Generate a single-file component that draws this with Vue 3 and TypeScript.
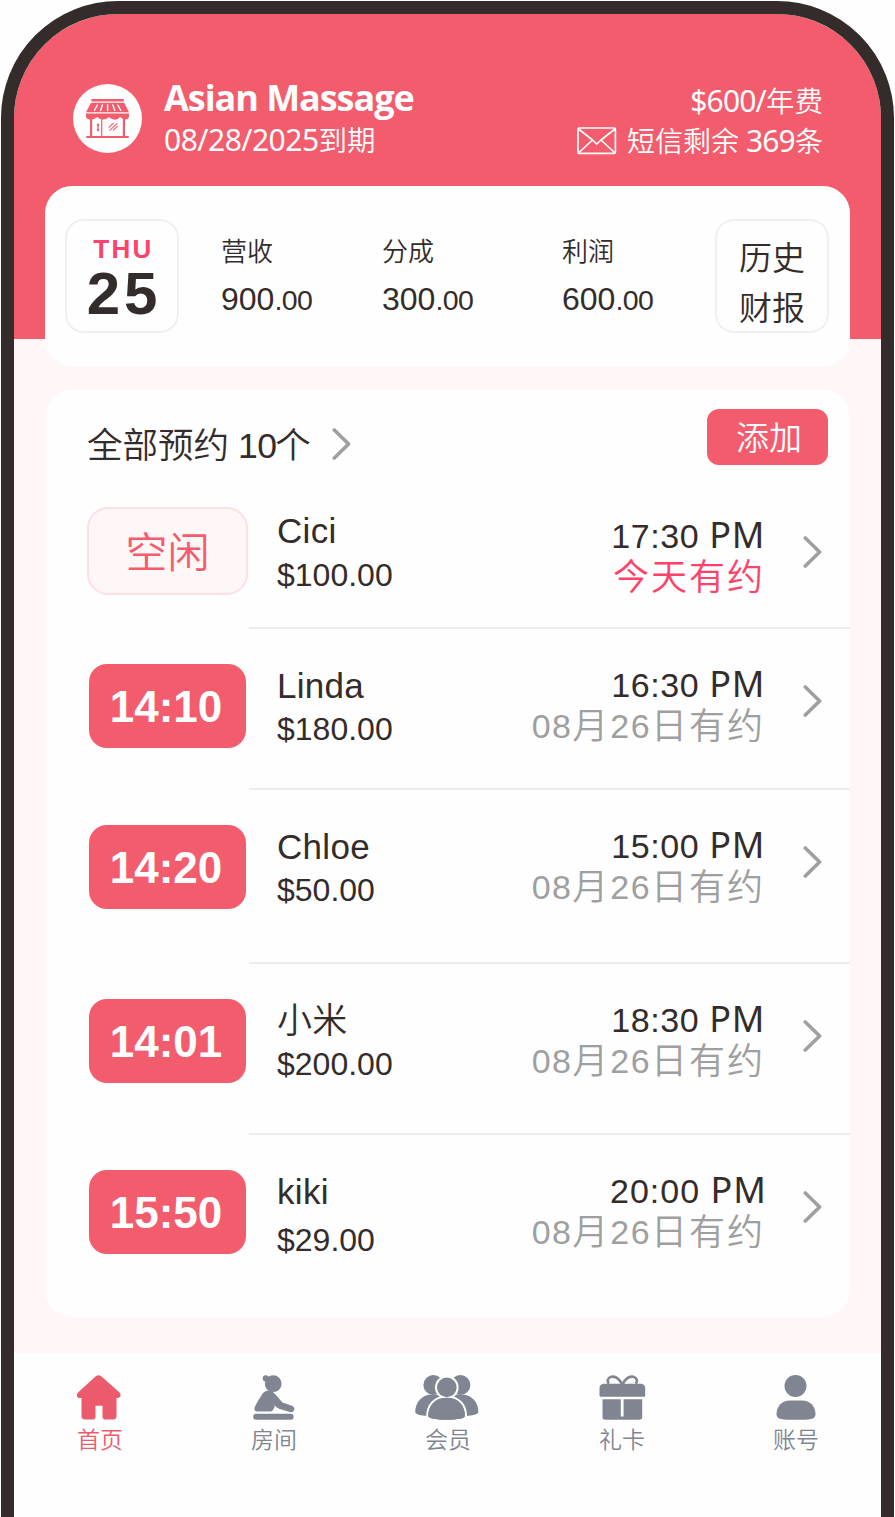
<script setup lang="ts">
interface Stat {
  label: string
  whole: string
  cents: string
}

interface Booking {
  badge: string
  free?: boolean
  name: string
  price: string
  time: string
  note: string
  today?: boolean
  variant: string
}

interface Tab {
  id: string
  label: string
  active?: boolean
}

const stats: Stat[] = [
  { label: '营收', whole: '900', cents: '.00' },
  { label: '分成', whole: '300', cents: '.00' },
  { label: '利润', whole: '600', cents: '.00' },
]

const bookings: Booking[] = [
  { badge: '空闲', free: true, name: 'Cici', price: '$100.00', time: '17:30', note: '今天有约', today: true, variant: 'row-first' },
  { badge: '14:10', name: 'Linda', price: '$180.00', time: '16:30', note: '08月26日有约', variant: 'row-short' },
  { badge: '14:20', name: 'Chloe', price: '$50.00', time: '15:00', note: '08月26日有约', variant: 'row-tall' },
  { badge: '14:01', name: '小米', price: '$200.00', time: '18:30', note: '08月26日有约', variant: 'row-medium' },
  { badge: '15:50', name: 'kiki', price: '$29.00', time: '20:00', note: '08月26日有约', variant: 'row-last' },
]

const tabs: Tab[] = [
  { id: 'home', label: '首页', active: true },
  { id: 'room', label: '房间' },
  { id: 'members', label: '会员' },
  { id: 'gift', label: '礼卡' },
  { id: 'account', label: '账号' },
]

// Splits a note into runs of digits and runs of characters, which are set at different sizes.
const runs = (note: string): string[] => note.match(/\d+|\D+/g) ?? []
const isDigits = (run: string): boolean => /^\d/.test(run)
</script>

<template>
  <div class="stage">
    <div class="phone">
      <header class="top">
        <svg class="shop" viewBox="0 0 69 69">
          <circle cx="34.5" cy="34.5" r="34.5" fill="#fefefe" />
          <g fill="#f25c6c">
            <rect x="18.3" y="15" width="32.6" height="2.6" rx="0.8" />
            <path d="M18 18.8H51.2L56 28.2H13Z" />
            <path d="M13 29.6H56V32.5Q55.5 35.4 52.2 35.4Q49.5 35.4 47.2 33Q44.5 36 41.2 35.6Q38 35.4 35.8 33Q33 35.8 29.5 35.6Q26.3 35.4 24.3 33Q22 35.4 17 35.4Q13.5 35.4 13 32.5Z" />
            <rect x="17" y="35" width="2.2" height="18" />
            <rect x="49.8" y="35" width="2.2" height="18" />
            <rect x="28.1" y="35" width="1.2" height="17" />
            <rect x="13" y="52" width="43" height="2.1" rx="1" />
            <rect x="24.4" y="41" width="1.3" height="5" />
            <circle cx="25" cy="40.8" r="1.2" />
            <circle cx="25" cy="46" r="1.2" />
          </g>
          <g fill="none" stroke="#fefefe" stroke-width="1.4" stroke-linecap="round">
            <path d="M24.4 21L21.4 26.5M29.4 21L27.6 26.5M34.6 20.8V26.5M39.8 21L41.8 26.5M44.8 21L47.8 26.5" />
          </g>
          <path d="M36 43.4L40.2 39.2M36.8 46.4L44 39.6M40.3 46.2L44.3 42.4" fill="none" stroke="#f25c6c" stroke-width="1.1" stroke-linecap="round" />
        </svg>
        <div class="shop-info">
          <div class="shop-name">Asian Massage</div>
          <div class="shop-date">08/28/2025<span class="cjk">到期</span></div>
        </div>
        <div class="plan">
          <div class="plan-fee">$600/<span class="cjk">年费</span></div>
          <div class="plan-sms">
            <svg class="mail" viewBox="0 0 40 28" fill="none" stroke="#fefefe" stroke-width="1.7" stroke-linejoin="round">
              <rect x="1" y="1" width="37.4" height="25.4" rx="1.2" />
              <path d="M1.5 2L15.5 13L19.7 17L24 13L38 2M1.5 26L15.5 13M38 26L24 13" />
            </svg>
            <span><span class="cjk">短信剩余</span> 369<span class="cjk">条</span></span>
          </div>
        </div>
      </header>

      <section class="summary">
        <div class="tile day">
          <span class="weekday">THU</span>
          <span class="date">25</span>
        </div>
        <div class="stats">
          <div v-for="s in stats" :key="s.label" class="stat">
            <div class="stat-label">{{ s.label }}</div>
            <div class="stat-value">{{ s.whole }}<small>{{ s.cents }}</small></div>
          </div>
        </div>
        <div class="tile history">
          <span>历史</span>
          <span>财报</span>
        </div>
      </section>

      <section class="card">
        <div class="card-head">
          <h2 class="card-title">全部预约<span class="count">10</span>个</h2>
          <svg class="chevron head-chevron" viewBox="0 0 20 34"><path d="M2.3 3L16.6 17L2.3 31" /></svg>
          <button class="add">添加</button>
        </div>
        <template v-for="(b, i) in bookings" :key="b.name">
          <div v-if="i > 0" class="divider"></div>
          <div class="row" :class="b.variant">
            <div class="badge" :class="{ free: b.free }">{{ b.badge }}</div>
            <div class="guest">
              <div class="name">{{ b.name }}</div>
              <div class="price">{{ b.price }}</div>
            </div>
            <div class="slot">
              <div class="time">{{ b.time }} <span class="pm">PM</span></div>
              <div class="note" :class="{ today: b.today }"><span v-for="(run, n) in runs(b.note)" :key="n" :class="{ digits: isDigits(run) }">{{ run }}</span></div>
            </div>
            <svg class="chevron" viewBox="0 0 20 34"><path d="M2.3 3L16.6 17L2.3 31" /></svg>
          </div>
        </template>
      </section>

      <nav class="tabs">
        <div v-for="t in tabs" :key="t.id" class="tab" :class="{ active: t.active }">
          <svg class="tab-icon" viewBox="0 0 66 46" fill="currentColor">
            <path
              v-if="t.id === 'home'"
              d="M29.8 1.3Q32.5 -1 35.2 1.3L53.6 17.6Q55.2 19.4 54.2 21.6Q53.4 23 51.8 23H50.5V41Q50.5 44.6 47 44.6H39.5Q36.5 44.6 36.5 41.5V30.7H29.5V41.5Q29.5 44.6 26.5 44.6H19Q15.5 44.6 15.5 41V23H13.5Q11.8 23 11.2 21.8Q10.4 19.6 12 17.6Z"
            />
            <g v-else-if="t.id === 'room'">
              <circle cx="33.2" cy="8.7" r="8.4" />
              <circle cx="25.8" cy="3.4" r="3.1" />
              <path d="M22.8 18.2Q25.6 15 29.4 15.6Q33 16 35.5 19.4L42.4 27.6L52 30.7Q54.8 32 54.4 34.6Q53.6 37.6 50.6 37.2L39 33.8Q36.4 32.8 34.8 30.2Q34.6 33.6 32.6 35.4Q31.6 36.5 30 36.5H16.6Q14 36 14.5 33Q15.4 29.6 22.8 18.2Z" />
              <rect x="13.2" y="38.7" width="40.4" height="6" rx="3" />
            </g>
            <g v-else-if="t.id === 'members'">
              <circle cx="19.4" cy="10" r="10" />
              <circle cx="46.4" cy="10" r="10" />
              <path d="M1.2 37C1.2 27 8 20 17 19.4H48.6C57.6 20 64.4 27 64.4 37C64.4 39.4 58 40.6 52 40.9H13C7 40.6 1.2 39.4 1.2 37Z" />
              <g stroke="#fefefe" stroke-width="4" paint-order="stroke">
                <path d="M14.2 41C14.2 31 21 22.4 32.7 22.4S51 31 51 41C51 43.2 44 44.7 32.7 44.7S14.2 43.2 14.2 41Z" />
                <circle cx="32.8" cy="12.4" r="9.8" />
              </g>
              <path d="M14.2 41C14.2 31 21 22.8 32.7 22.8S51 31 51 41C51 43.2 44 44.7 32.7 44.7S14.2 43.2 14.2 41Z" />
            </g>
            <g v-else-if="t.id === 'gift'">
              <path d="M15.5 8.7H53.2Q57.2 9.4 57.2 13V20.5Q57.2 21.7 56 21.7H12.7Q11.5 21.7 11.5 20.5V13Q11.5 9.4 15.5 8.7Z" />
              <path d="M14.5 24.3H32.8V41.5H35.6V24.3H54.2V42Q54.2 44.7 51.5 44.7H17.2Q14.5 44.7 14.5 42Z" />
              <path d="M34.3 9.6C31.4 4 27.4 1 23.3 1.8C19.6 2.8 18.8 6 20.8 8.8M34.3 9.6C37.2 4 41.2 1 45.3 1.8C49 2.8 49.8 6 47.8 8.8" fill="none" stroke="currentColor" stroke-width="2.6" />
            </g>
            <g v-else>
              <circle cx="33.5" cy="11" r="11" />
              <path d="M14.5 39.5C14.5 31 20 25.4 28 25.4H40C48 25.4 53.5 31 53.5 39.5Q53.5 44.7 43 44.7H25Q14.5 44.7 14.5 39.5Z" />
            </g>
          </svg>
          <span class="tab-label">{{ t.label }}</span>
        </div>
      </nav>
    </div>
  </div>
</template>

<style>
html,
body {
  background: #fefefe;
  overflow: hidden;
}
</style>

<style scoped>
.stage {
  width: 895px;
  height: 1517px;
  box-sizing: border-box;
  padding: 1px 1px 0;
  overflow: hidden;
  color: #342c2a;
  font-family: 'Liberation Sans', 'Noto Sans CJK SC', sans-serif;
  white-space: nowrap;
}
.stage * {
  box-sizing: border-box;
}
.phone {
  height: 1640px;
  border: 13px solid #342c2a;
  border-radius: 117px;
  background: linear-gradient(#f25c6c 0 325px, #fff6f7 325px 1339px, #fefefe 1339px);
  background-origin: padding-box;
  background-clip: padding-box;
  background-repeat: no-repeat;
  overflow: hidden;
  position: relative;
}

.top {
  display: flex;
  height: 172px;
  padding: 70px 58px 0 59px;
  color: #fefefe;
  font-family: 'Noto Sans', 'Noto Sans CJK SC', sans-serif;
  font-weight: 400;
}
.cjk {
  font-family: 'Noto Sans CJK SC', sans-serif;
  font-weight: 350;
  font-size: 28.5px;
  letter-spacing: 0;
}
.shop {
  width: 69px;
  height: 69px;
}
.shop-info {
  margin-left: 22px;
  margin-top: -8px;
}
.shop-name {
  font: 700 36px/44px 'Open Sans', 'Noto Sans', sans-serif;
  letter-spacing: -1.05px;
}
.shop-date {
  margin-top: -2px;
  font-size: 30px;
  line-height: 42px;
  letter-spacing: -0.5px;
}
.plan {
  margin-left: auto;
  margin-top: -5px;
  text-align: right;
  font-size: 30px;
  letter-spacing: -0.8px;
}
.plan-fee,
.plan-sms {
  height: 41px;
  line-height: 41px;
}
.plan-sms {
  display: flex;
  justify-content: flex-end;
  align-items: center;
  gap: 10px;
}
.plan-sms .cjk {
  font-size: 28px;
}
.mail {
  width: 40px;
  height: 28px;
}

.summary {
  display: flex;
  width: 805px;
  height: 180px;
  margin-left: 31px;
  padding: 33px 21px 0 20px;
  border-radius: 27px;
  background: #fefefe;
}
.tile {
  display: flex;
  flex-direction: column;
  align-items: center;
  flex: none;
  width: 114px;
  height: 114px;
  border: 2px solid #f0f0f0;
  border-radius: 19px;
}
.weekday {
  margin-top: 16px;
  padding-left: 3px;
  color: #fd4369;
  font-weight: 700;
  font-size: 26px;
  line-height: 24px;
  letter-spacing: 2.3px;
}
.date {
  margin-top: 5px;
  padding-left: 4px;
  font-weight: 700;
  font-size: 60px;
  line-height: 56px;
  letter-spacing: 4px;
}
.stats {
  display: grid;
  grid-template-columns: 161px 180px 1fr;
  flex: 1;
  padding-left: 42px;
}
.stat-label {
  margin-top: 14px;
  font-size: 26px;
  line-height: 38px;
  font-weight: 350;
}
.stat-value {
  margin-top: 8px;
  font-size: 32px;
  line-height: 40px;
}
.stat-value small {
  font-size: 28.5px;
  letter-spacing: -0.6px;
}
.history {
  padding-top: 13px;
  font-size: 33px;
  line-height: 50px;
  font-weight: 350;
}

.card {
  width: 805px;
  height: 927px;
  margin: 24px 0 0 31px;
  border-radius: 27px;
  background: #fefefe;
}
.card-head {
  display: flex;
  height: 90px;
  padding: 19px 22px 0 42px;
}
.card-title {
  margin: 10px 0 0;
  font-weight: 350;
  font-size: 35.5px;
  line-height: 54px;
}
.count {
  margin: 0 -1px 0 9px;
  letter-spacing: -0.6px;
}
.head-chevron {
  margin: 18px 0 0 21px;
}
.chevron {
  width: 20px;
  height: 34px;
  flex: none;
  fill: none;
  stroke: #9f9f9f;
  stroke-width: 3.6;
  stroke-linecap: round;
  stroke-linejoin: round;
}
.add {
  width: 121px;
  height: 56px;
  margin-left: auto;
  padding: 0 0 2px 3px;
  border: 0;
  border-radius: 12px;
  background: #f25c6c;
  color: #fefefe;
  font: 350 33px/54px 'Noto Sans CJK SC', sans-serif;
}
.divider {
  height: 2px;
  margin-left: 204px;
  background: #ececec;
}
.row {
  display: flex;
  align-items: flex-start;
  padding: 35px 27px 0 44px;
}
.row-first {
  height: 147px;
}
.row-short {
  height: 159px;
}
.row-tall {
  height: 172px;
}
.row-medium {
  height: 169px;
}
.badge {
  width: 157px;
  height: 84px;
  padding-right: 3px;
  border-radius: 18px;
  background: #f25c6c;
  color: #fefefe;
  font-weight: 700;
  font-size: 44px;
  line-height: 86px;
  text-align: center;
}
.badge.free {
  width: 161px;
  height: 88px;
  margin: -8px -2px 0;
  padding-right: 0;
  border: 2px solid #fce0e3;
  border-radius: 21px;
  background: #fff6f7;
  color: #f25c6c;
  font-weight: 350;
  font-size: 42px;
  line-height: 89px;
}
.guest {
  margin-left: 31px;
}
.name {
  margin-top: 1px;
  font-size: 35px;
  height: 42px;
  line-height: 42px;
  letter-spacing: 0.3px;
  font-weight: 350;
}
.price {
  margin-top: 1px;
  font-size: 32px;
  height: 42px;
  line-height: 42px;
}
.row-first .name {
  margin-top: -5px;
}
.row-first .price {
  margin-top: 2px;
}
.row-last .price {
  margin-top: 6px;
}
.slot {
  margin: -1px 0 0 auto;
  text-align: right;
}
.time {
  font-size: 34px;
  height: 42px;
  line-height: 42px;
  letter-spacing: 0.6px;
}
.row-last .time {
  margin-right: -2px;
  letter-spacing: 1px;
}
.pm {
  font: 400 36px/42px 'Noto Sans', sans-serif;
}
.note {
  height: 42px;
  color: #9f9f9f;
  font-size: 36px;
  line-height: 43px;
  letter-spacing: 2px;
  font-weight: 350;
}
.note .digits {
  font-size: 34px;
  line-height: 1;
  letter-spacing: 1.4px;
  vertical-align: 1px;
}
.note.today {
  color: #fd4369;
}
.row .chevron {
  margin: 20px 0 0 38px;
}

.tabs {
  display: grid;
  grid-template-columns: repeat(5, 174px);
  justify-content: center;
  margin-top: 36px;
  padding-top: 22px;
}
.tab {
  display: flex;
  flex-direction: column;
  align-items: center;
  color: #818591;
}
.tab.active {
  color: #ec5b6d;
}
.tab-icon {
  width: 66px;
  height: 46px;
  margin-right: 1px;
}
.tab-label {
  margin-top: 2px;
  padding-left: 1px;
  font-size: 23px;
  line-height: 34px;
  font-weight: 350;
}
</style>
